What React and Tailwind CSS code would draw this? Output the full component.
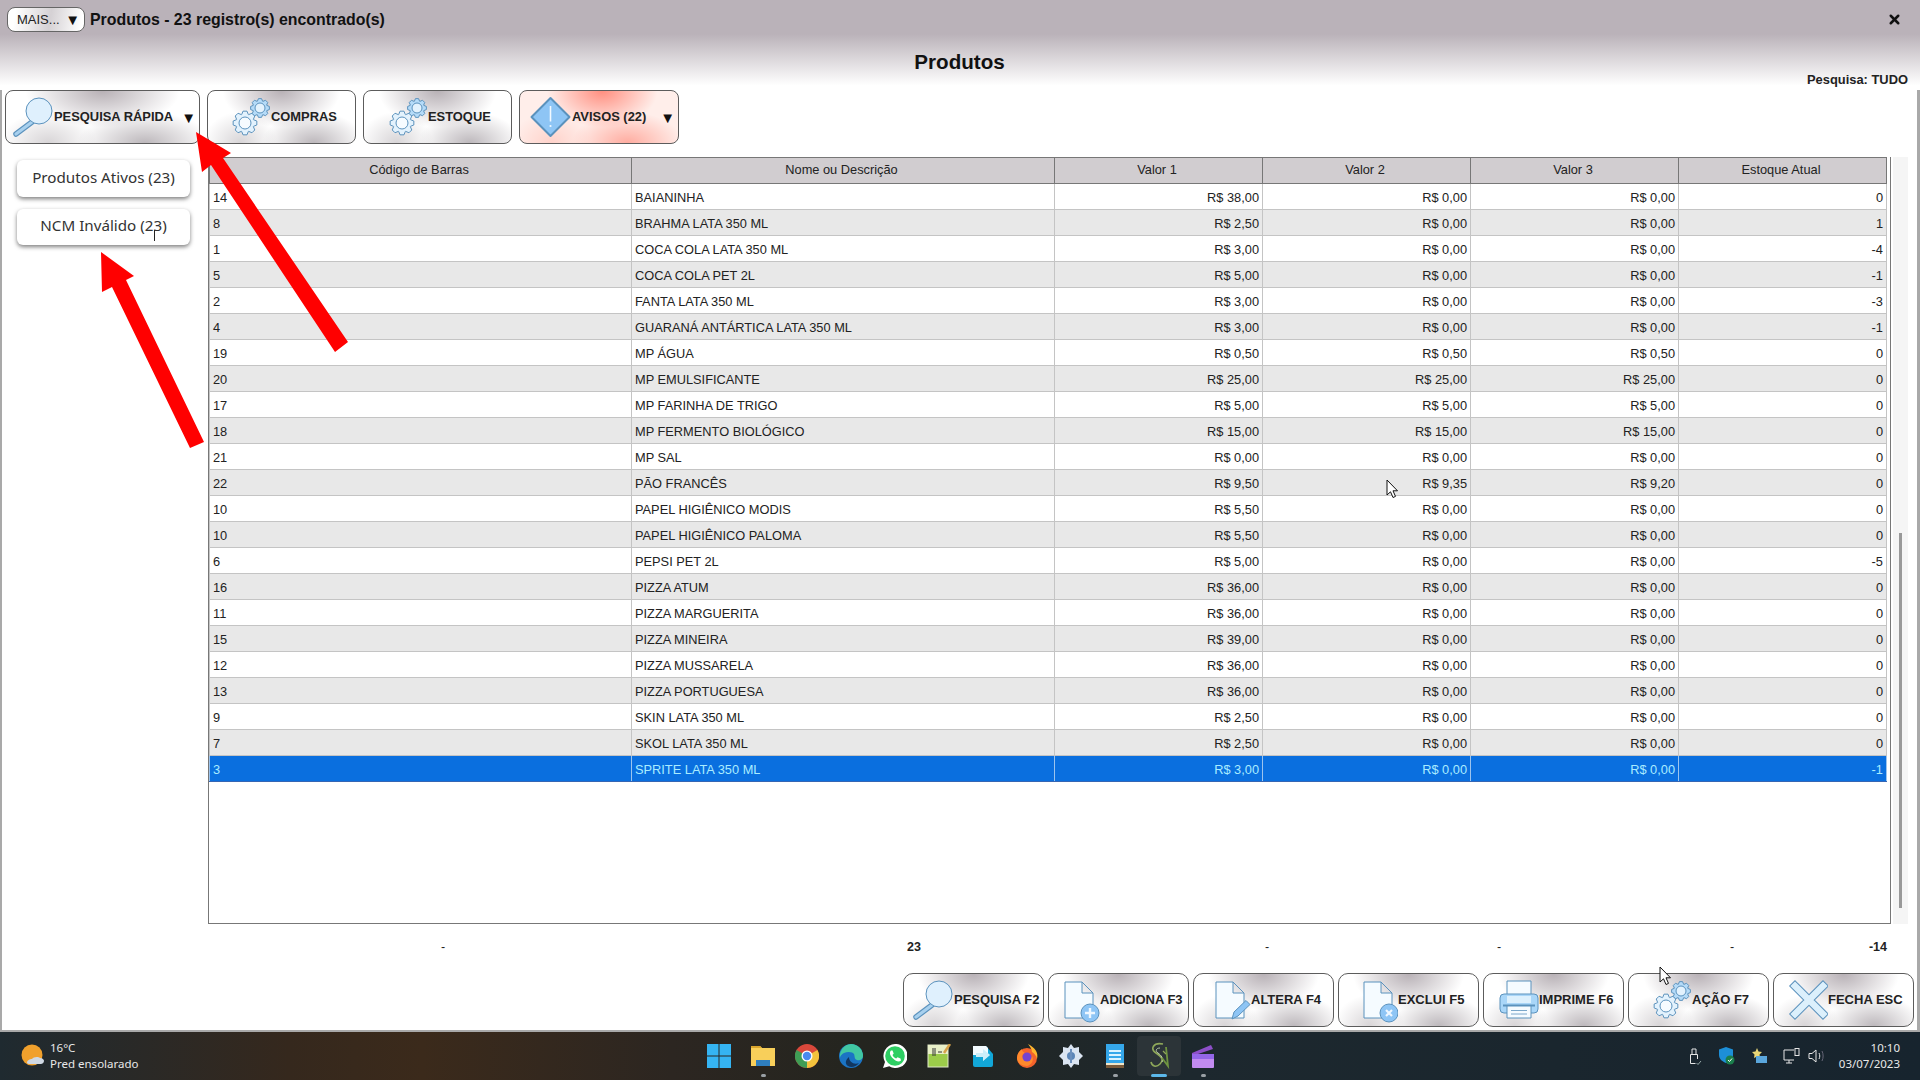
import React from 'react';
import { X } from 'lucide-react';

const line = '#5b92bd';
const pale = '#e3f2fd';
const mid = '#8ec5f5';

const rows = [
  ['14', 'BAIANINHA', 'R$ 38,00', 'R$ 0,00', 'R$ 0,00', '0'],
  ['8', 'BRAHMA LATA 350 ML', 'R$ 2,50', 'R$ 0,00', 'R$ 0,00', '1'],
  ['1', 'COCA COLA LATA 350 ML', 'R$ 3,00', 'R$ 0,00', 'R$ 0,00', '-4'],
  ['5', 'COCA COLA PET 2L', 'R$ 5,00', 'R$ 0,00', 'R$ 0,00', '-1'],
  ['2', 'FANTA LATA 350 ML', 'R$ 3,00', 'R$ 0,00', 'R$ 0,00', '-3'],
  ['4', 'GUARANÁ ANTÁRTICA LATA 350 ML', 'R$ 3,00', 'R$ 0,00', 'R$ 0,00', '-1'],
  ['19', 'MP ÁGUA', 'R$ 0,50', 'R$ 0,50', 'R$ 0,50', '0'],
  ['20', 'MP EMULSIFICANTE', 'R$ 25,00', 'R$ 25,00', 'R$ 25,00', '0'],
  ['17', 'MP FARINHA DE TRIGO', 'R$ 5,00', 'R$ 5,00', 'R$ 5,00', '0'],
  ['18', 'MP FERMENTO BIOLÓGICO', 'R$ 15,00', 'R$ 15,00', 'R$ 15,00', '0'],
  ['21', 'MP SAL', 'R$ 0,00', 'R$ 0,00', 'R$ 0,00', '0'],
  ['22', 'PÃO FRANCÊS', 'R$ 9,50', 'R$ 9,35', 'R$ 9,20', '0'],
  ['10', 'PAPEL HIGIÊNICO MODIS', 'R$ 5,50', 'R$ 0,00', 'R$ 0,00', '0'],
  ['10', 'PAPEL HIGIÊNICO PALOMA', 'R$ 5,50', 'R$ 0,00', 'R$ 0,00', '0'],
  ['6', 'PEPSI PET 2L', 'R$ 5,00', 'R$ 0,00', 'R$ 0,00', '-5'],
  ['16', 'PIZZA ATUM', 'R$ 36,00', 'R$ 0,00', 'R$ 0,00', '0'],
  ['11', 'PIZZA MARGUERITA', 'R$ 36,00', 'R$ 0,00', 'R$ 0,00', '0'],
  ['15', 'PIZZA MINEIRA', 'R$ 39,00', 'R$ 0,00', 'R$ 0,00', '0'],
  ['12', 'PIZZA MUSSARELA', 'R$ 36,00', 'R$ 0,00', 'R$ 0,00', '0'],
  ['13', 'PIZZA PORTUGUESA', 'R$ 36,00', 'R$ 0,00', 'R$ 0,00', '0'],
  ['9', 'SKIN LATA 350 ML', 'R$ 2,50', 'R$ 0,00', 'R$ 0,00', '0'],
  ['7', 'SKOL LATA 350 ML', 'R$ 2,50', 'R$ 0,00', 'R$ 0,00', '0'],
  ['3', 'SPRITE LATA 350 ML', 'R$ 3,00', 'R$ 0,00', 'R$ 0,00', '-1'],
];

// gear outline with n teeth
function gearPath(cx, cy, r, n = 8) {
  const pts = [];
  for (let i = 0; i < n; i++) {
    const a = (i / n) * Math.PI * 2;
    const s = Math.PI / n;
    [[r * 0.76, -s * 0.95], [r, -s * 0.42], [r, s * 0.42], [r * 0.76, s * 0.95]].forEach(([d, o]) => {
      pts.push(`${(cx + d * Math.cos(a + o)).toFixed(2)} ${(cy + d * Math.sin(a + o)).toFixed(2)}`);
    });
  }
  return `M${pts.join('L')}Z`;
}

const Svg = ({ children }) => (
  <svg width="48" height="48" viewBox="0 0 48 48" className="shrink-0" strokeLinejoin="round">
    {children}
  </svg>
);

const SearchIcon = () => (
  <Svg>
    <line x1="26" y1="29" x2="10" y2="41" stroke={line} strokeWidth="5.5" strokeLinecap="round" />
    <line x1="26" y1="29" x2="10" y2="41" stroke="#a8d0ee" strokeWidth="3.2" strokeLinecap="round" />
    <circle cx="33" cy="18" r="13" fill="#dff0fd" stroke={line} strokeWidth="1" />
  </Svg>
);

const GearsIcon = () => (
  <Svg>
    <path d={gearPath(22, 30, 12)} fill={pale} stroke={line} strokeWidth="1" />
    <circle cx="22" cy="30" r="6" fill="#f6fbff" stroke={line} strokeWidth="1" />
    <path d={gearPath(37, 15, 9.5)} fill="#b5dbf8" stroke={line} strokeWidth="1" />
    <circle cx="37" cy="15" r="5" fill={pale} stroke={line} strokeWidth="1" />
  </Svg>
);

const Doc = ({ x }) => (
  <path
    d={`M${x} 6H${x + 17}L${x + 28} 17V42H${x}Z M${x + 17} 6V17H${x + 28}`}
    fill="#f5fbff"
    stroke={line}
    strokeWidth="1"
  />
);

const AddIcon = () => (
  <Svg>
    <Doc x={13} />
    <circle cx="38" cy="37" r="9" fill={mid} stroke={line} strokeWidth="1" />
    <path d="M38 32V42M33 37H43" stroke="#eef7ff" strokeWidth="2.4" />
  </Svg>
);

const EditIcon = () => (
  <Svg>
    <Doc x={13} />
    <path d="M29 43L31 36L43 24.5L47 28.5L35 40Z" fill={mid} stroke={line} strokeWidth="1" />
  </Svg>
);

const DeleteIcon = () => (
  <Svg>
    <Doc x={14} />
    <circle cx="39" cy="37" r="9" fill={mid} stroke={line} strokeWidth="1" />
    <path d="M36 34L42 40M42 34L36 40" stroke="#eef7ff" strokeWidth="2.2" />
  </Svg>
);

const PrintIcon = () => (
  <Svg>
    <rect x="16" y="5" width="24" height="15" fill="#f5fbff" stroke={line} />
    <rect x="9" y="18" width="38" height="19" rx="4" fill="#a9d6f8" stroke={line} />
    <rect x="16" y="20" width="24" height="7" fill="#dcf0fd" stroke="none" />
    <line x1="12" y1="29.5" x2="44" y2="29.5" stroke={line} strokeWidth="2" />
    <rect x="16" y="30" width="24" height="12" fill="#f5fbff" stroke={line} />
    <path d="M20 34.5H36M20 38H36" stroke={line} strokeWidth="0.8" />
  </Svg>
);

const CloseIcon = () => (
  <Svg>
    <path d="M15 10L43 38M43 10L15 38" stroke={line} strokeWidth="8.5" strokeLinecap="square" />
    <path d="M15 10L43 38M43 10L15 38" stroke="#dcf0fc" strokeWidth="6.5" strokeLinecap="square" />
  </Svg>
);

const WarnIcon = () => (
  <Svg>
    <path d="M26.5 5L45.5 24L26.5 43L7.5 24Z" fill={mid} stroke={line} strokeWidth="2" />
    <path d="M26.5 13V28.5" stroke="#f2f9ff" strokeWidth="1.6" />
    <circle cx="26.5" cy="33" r="1.1" fill="#f2f9ff" />
  </Svg>
);

const silver =
  'bg-white bg-[radial-gradient(ellipse_40%_70%_at_50%_0%,#b8b1b6,transparent),radial-gradient(ellipse_35%_60%_at_72%_100%,#bdb8bc,transparent),radial-gradient(ellipse_25%_60%_at_22%_100%,#d8d5d7,transparent)]';
const reddish =
  'bg-[#ffeeea] bg-[radial-gradient(ellipse_35%_70%_at_52%_0%,#ff8f80,transparent),radial-gradient(ellipse_35%_60%_at_68%_100%,#ffaca0,transparent),radial-gradient(ellipse_25%_60%_at_20%_100%,#ffd2ca,transparent)]';

const bottomButtons = [
  { label: 'PESQUISA F2', icon: <SearchIcon />, pad: 'pl-[2px]' },
  { label: 'ADICIONA F3', icon: <AddIcon />, pad: 'pl-[3px]' },
  { label: 'ALTERA F4', icon: <EditIcon />, pad: 'pl-[9px]' },
  { label: 'EXCLUI F5', icon: <DeleteIcon />, pad: 'pl-[11px]' },
  { label: 'IMPRIME F6', icon: <PrintIcon />, pad: 'pl-[7px]' },
  { label: 'AÇÃO F7', icon: <GearsIcon />, pad: 'pl-[15px]' },
  { label: 'FECHA ESC', icon: <CloseIcon />, pad: 'pl-[6px]' },
];

const ToolButton = ({ children, className }) => (
  <button className={`h-[54px] flex items-center rounded-lg border border-[#5c5c5c] text-[12.9px] font-bold text-[#222] ${className}`}>
    {children}
  </button>
);

/* taskbar icons */
const Win = () => (
  <svg width="24" height="24" viewBox="0 0 24 24">
    <path d="M0 0h11.5v11.5H0zM12.5 0H24v11.5H12.5zM0 12.5h11.5V24H0zM12.5 12.5H24V24H12.5z" fill="#35b4f2" />
  </svg>
);
const Folder = () => (
  <svg width="24" height="24" viewBox="0 0 24 24">
    <path d="M0 2h9l2 2h13v18H0z" fill="#f8cf5a" />
    <path d="M0 2h9l2 2H0z" fill="#d9a52d" />
    <path d="M5 16h14v6H5z" fill="#2f7fbf" />
  </svg>
);
const Chrome = () => (
  <svg width="24" height="24" viewBox="0 0 24 24">
    <circle cx="12" cy="12" r="12" fill="#d9483b" />
    <path d="M12 12L22.4 6A12 12 0 0 1 12 24z" fill="#f3c23c" />
    <path d="M12 12L12 24A12 12 0 0 1 1.6 6z" fill="#3f9d55" />
    <circle cx="12" cy="12" r="5.5" fill="#fff" />
    <circle cx="12" cy="12" r="4.2" fill="#4a8af0" />
  </svg>
);
const Edge = () => (
  <svg width="24" height="24" viewBox="0 0 24 24">
    <circle cx="12" cy="12" r="12" fill="#1b74c4" />
    <path d="M12 0a12 12 0 0 1 12 12c0 3-3 5-6 4-3-1-2-4-3-6S9 7 5 9 1 14 1 14A12 12 0 0 1 12 0z" fill="#41c7a2" />
    <path d="M10 13c0 5 5 8 10 6-3 4-8 5-11 3s-3-6 1-9z" fill="#12365f" />
  </svg>
);
const Whats = () => (
  <svg width="24" height="24" viewBox="0 0 24 24">
    <path d="M12 0a12 12 0 0 0-10 18L0 24l6.3-1.8A12 12 0 1 0 12 0z" fill="#fff" />
    <circle cx="12" cy="12" r="9.8" fill="#2ecf63" />
    <path d="M8 6.5c-2 2-1 5 2 8s6 4 8 2l-.5-2-3-1.2-1.3 1.3c-1.5-.6-3-2.2-3.7-3.7L10.7 9.5 9.5 6.5z" fill="#fff" />
  </svg>
);
const NotepadPP = () => (
  <svg width="24" height="24" viewBox="0 0 24 24">
    <rect x="1" y="1" width="20" height="22" fill="#9ccc4a" stroke="#dfe8c8" />
    <rect x="1" y="1" width="20" height="9" fill="#e9f0c8" />
    <path d="M6 4V12M8 4V12M11 8H15" stroke="#333" strokeWidth="1" />
    <path d="M17 9L23 0" stroke="#d6a24a" strokeWidth="2.5" />
  </svg>
);
const Share = () => (
  <svg width="24" height="24" viewBox="0 0 24 24">
    <path d="M2 2h13l7 8v11a2 2 0 0 1-2 2H4a2 2 0 0 1-2-2z" fill="#12a7d8" />
    <path d="M2 2h13l2 2v7H2z" fill="#f3fbff" />
    <path d="M5 9h7V5l7 6-7 6v-4H5z" fill="#fff" />
    <path d="M5 9h7V5l7 6-7 6v-4H5z" fill="#7fd4ef" opacity=".4" />
  </svg>
);
const Firefox = () => (
  <svg width="24" height="24" viewBox="0 0 24 24">
    <circle cx="12" cy="14" r="10" fill="#f4632c" />
    <path d="M13 0c6 3 11 8 9 15-1-4-3-6-5-7 0-3-2-5-4-8z" fill="#ffb52e" />
    <path d="M2 14c0-4 2-7 5-9 0 3 2 3 3 4-3 1-3 3-2 5 3 3 8 2 9-2 2 4 0 9-5 10-5 0-10-3-10-8z" fill="#ff8a2c" />
    <circle cx="12" cy="13" r="4.5" fill="#7543d0" />
  </svg>
);
const Snow = () => (
  <svg width="24" height="24" viewBox="0 0 24 24">
    <path d="M12 0l3 4 5-1 0 5 4 4-4 4 0 5-5-1-3 4-3-4-5 1 0-5-4-4 4-4 0-5 5 1z" fill="#dbe5f2" />
    <circle cx="12" cy="12" r="4" fill="#5d86b8" />
    <path d="M12 5v14" stroke="#6b8fbd" strokeWidth="2" />
  </svg>
);
const NotesIcon = () => (
  <svg width="24" height="24" viewBox="0 0 24 24">
    <rect x="3" y="0" width="18" height="20" fill="#35a7ea" />
    <rect x="3" y="20" width="18" height="4" fill="#7a5a3a" />
    <rect x="3" y="19" width="18" height="2" fill="#f0e5c8" />
    <path d="M6 7h12M6 11h12M6 15h12" stroke="#d9f2ff" strokeWidth="2" />
  </svg>
);
const SApp = () => (
  <svg width="24" height="28" viewBox="0 0 24 28" fill="none">
    <path d="M16 2C6 0 3 7 9 11s8 7 4 11-8 2-9-2" stroke="#8fa85a" strokeWidth="1.6" />
    <path d="M13 6c-4 0-5 3-2 5s6 6 4 9" stroke="#b9c9a8" strokeWidth="1" />
    <path d="M19 5l2 19-6-8" stroke="#6f9440" strokeWidth="1.8" />
    <path d="M16 9l3 3" stroke="#8fa85a" strokeWidth="1.2" />
  </svg>
);
const Clapper = () => (
  <svg width="24" height="24" viewBox="0 0 24 24">
    <path d="M1 9L20 1l2 4L1 12z" fill="#8d4fc9" />
    <rect x="1" y="10" width="22" height="14" rx="1" fill="#c28bf0" />
    <rect x="1" y="10" width="22" height="5" fill="#9466e8" />
  </svg>
);

const taskbarIcons = [
  { el: <Win /> },
  { el: <Folder />, dot: true },
  { el: <Chrome /> },
  { el: <Edge /> },
  { el: <Whats /> },
  { el: <NotepadPP /> },
  { el: <Share /> },
  { el: <Firefox /> },
  { el: <Snow /> },
  { el: <NotesIcon />, dot: true },
  { el: <SApp />, active: true },
  { el: <Clapper />, dot: true },
];

const Cursor = ({ className }) => (
  <svg width="13" height="20" viewBox="0 0 13 20" className={`absolute ${className}`}>
    <path d="M1 1V16L4.5 12.8L7 18.5L9.5 17.4L7 11.8H11.5Z" fill="#fff" stroke="#111" strokeWidth="1" strokeLinejoin="round" />
  </svg>
);

export default function App() {
  return (
    <div className="relative w-[1920px] h-[1080px] overflow-hidden bg-white font-['Liberation_Sans',Arial,sans-serif] text-[#222]">
      <div className="h-[1032px] border-l-2 border-r-[3px] border-b-2 border-[#a9a9a9] flex flex-col">
        {/* header */}
        <div className="h-[90px] shrink-0 bg-[linear-gradient(180deg,#bab2b9_0%,#bab2b9_38%,#ffffff_95%)] -ml-[2px] -mr-[3px] pl-[2px] pr-[3px]">
          <div className="flex items-center pt-[7px] pl-[5px]">
            <button className="w-[78px] h-[25px] pl-[9px] pr-[4px] flex items-center justify-between rounded-lg border border-[#666] bg-[linear-gradient(100deg,#ffffff_10%,#d5d1d4_55%,#ffffff_95%)] text-[13px]">
              <span>MAIS...</span>
              <span className="text-[15px] leading-none text-[#111]">▼</span>
            </button>
            <span className="ml-[5px] text-[15.9px] font-bold text-[#111]">Produtos - 23 registro(s) encontrado(s)</span>
            <X size={15} strokeWidth={4} className="ml-auto mr-[15px] text-[#111]" />
          </div>
          <div className="grid grid-cols-[1fr_auto_1fr] h-[58px]">
            <div />
            <h1 className="mt-[17px] leading-[26px] text-[20.6px] font-bold text-[#111]">Produtos</h1>
            <span className="self-end justify-self-end mb-[1px] mr-[9px] leading-[18px] text-[12.9px] font-bold text-[#222]">Pesquisa: TUDO</span>
          </div>
        </div>

        {/* toolbar */}
        <div className="flex gap-[7px] pl-[3px] shrink-0">
          <ToolButton className={`w-[195px] ${silver}`}>
            <SearchIcon />
            <span>PESQUISA RÁPIDA</span>
            <span className="ml-[8px] text-[15px] leading-none text-[#111]">▼</span>
          </ToolButton>
          <ToolButton className={`w-[149px] pl-[15px] ${silver}`}>
            <GearsIcon />
            <span>COMPRAS</span>
          </ToolButton>
          <ToolButton className={`w-[149px] pl-[16px] ${silver}`}>
            <GearsIcon />
            <span>ESTOQUE</span>
          </ToolButton>
          <ToolButton className={`w-[160px] pl-[4px] ${reddish}`}>
            <WarnIcon />
            <span>AVISOS (22)</span>
            <span className="ml-[14px] text-[15px] leading-none text-[#111]">▼</span>
          </ToolButton>
        </div>

        {/* content */}
        <div className="flex mt-[13px] h-[767px] shrink-0">
          <div className="w-[206px] shrink-0 pl-[15px] pt-[3px] flex flex-col gap-[12px] font-['Noto_Sans',sans-serif] text-[15.2px] text-[#333]">
            <button className="w-[173px] h-[37px] pb-[2px] rounded-md bg-white shadow-[0_2px_4px_rgba(0,0,0,0.5)]">Produtos Ativos (23)</button>
            <button className="w-[173px] h-[36px] pb-[3px] rounded-md bg-white shadow-[0_2px_4px_rgba(0,0,0,0.5)]">NCM Inválido (23)</button>
          </div>

          <div className="w-[1683px] h-full shrink-0 border-l border-r border-b border-[#777]">
            <table className="table-fixed w-[1677px] border-collapse text-[12.8px]">
              <colgroup>
                <col className="w-[422px]" />
                <col className="w-[423px]" />
                <col className="w-[208px]" />
                <col className="w-[208px]" />
                <col className="w-[208px]" />
                <col className="w-[208px]" />
              </colgroup>
              <thead>
                <tr className="h-[26px] bg-[#d1cdd0] text-[12.8px] font-normal">
                  {['Código de Barras', 'Nome ou Descrição', 'Valor 1', 'Valor 2', 'Valor 3', 'Estoque Atual'].map((h) => (
                    <th key={h} className="border border-[#777] font-normal text-center p-0 pb-[1px] pr-[3px]">{h}</th>
                  ))}
                </tr>
              </thead>
              <tbody>
                {rows.map((r, i) => {
                  const selected = i === rows.length - 1;
                  return (
                    <tr
                      key={i}
                      className={`h-[26px] ${selected ? 'bg-[#0a6fdf] text-[#a9ecff]' : i % 2 ? 'bg-[#e8e8e8]' : 'bg-white'}`}
                    >
                      {r.map((c, j) => (
                        <td
                          key={j}
                          className={`p-0 pt-[2px] border ${selected ? 'border-y-[#3566b4] border-x-[#9cc4ee]' : 'border-[#c4c4c4]'} ${j < 2 ? 'pl-[3px] text-left' : 'pr-[3px] text-right'}`}
                        >
                          {c}
                        </td>
                      ))}
                    </tr>
                  );
                })}
              </tbody>
            </table>
          </div>

          <div className="ml-[2px] w-[15px] h-full bg-[#f5f5f5] flex flex-col justify-end items-center pb-[16px]">
            <div className="w-[3px] h-[375px] bg-[#999]" />
          </div>
        </div>

        {/* totals */}
        <div className="flex pl-[206px] mt-[13px] h-[20px] items-center text-[12.5px] shrink-0">
          <span className="w-[470px] text-center">-</span>
          <span className="w-[472px] text-center font-bold">23</span>
          <span className="w-[234px] text-center">-</span>
          <span className="w-[230px] text-center">-</span>
          <span className="w-[236px] text-center">-</span>
          <span className="w-[37px] text-right font-bold">-14</span>
        </div>

        {/* action buttons */}
        <div className="flex justify-end gap-[4px] pr-[3px] mt-[16px] shrink-0">
          {bottomButtons.map((b) => (
            <button
              key={b.label}
              className={`w-[141px] h-[54px] flex items-center rounded-[10px] border border-[#5c5c5c] text-[13px] font-bold text-[#222] ${silver} ${b.pad}`}
            >
              {b.icon}
              <span className="whitespace-nowrap">{b.label}</span>
            </button>
          ))}
        </div>
      </div>

      {/* taskbar */}
      <div className="h-[48px] flex items-center bg-[linear-gradient(90deg,#1f2a30_0%,#35281d_15%,#3b2a1b_22%,#2c2621_35%,#24251f_45%,#1d282e_62%,#17242e_100%)] text-white font-['Noto_Sans',sans-serif]">
        <div className="w-[50px] pl-[21px] shrink-0">
          <svg width="24" height="26" viewBox="0 0 24 26">
            <circle cx="11" cy="12" r="10.5" fill="#f0a02c" />
            <path d="M6 20c0-3 3-4 5-4 1-2 6-3 8-1 3 0 4 2 4 3 0 2-2 3-3 3H8c-1 0-2-1-2-1z" fill="#cfd8e3" />
          </svg>
        </div>
        <div className="w-[647px] shrink-0 flex flex-col text-[11.5px] leading-[16px] text-[#e8e8e8]">
          <span>16°C</span>
          <span>Pred ensolarado</span>
        </div>
        <div className="flex shrink-0">
          {taskbarIcons.map((t, i) => (
            <div key={i} className={`relative w-[44px] h-[40px] flex items-center justify-center rounded ${t.active ? 'bg-[#2c3438]' : ''}`}>
              {t.el}
              {t.dot && <span className="absolute bottom-[-1px] w-[5px] h-[3px] rounded-full bg-[#9aa0a5]" />}
              {t.active && <span className="absolute bottom-[-1px] w-[16px] h-[3px] rounded-full bg-[#5cb8ea]" />}
            </div>
          ))}
        </div>
        <div className="flex items-center ml-[463px] gap-[17px] shrink-0">
          <svg width="14" height="17" viewBox="0 0 14 17" fill="none" stroke="#e6e6e6" strokeWidth="1">
            <path d="M2.5 6.5V15.5H7.5M2.5 6.5H9.5V11M4 6.5V1H8V6.5" />
            <path d="M8.5 15l1.5 1.5 3-3.5" stroke="#9aa" />
          </svg>
          <svg width="16" height="18" viewBox="0 0 16 18">
            <path d="M7 0l7 2.5V8c0 3-2 6-7 8-5-2-7-5-7-8V2.5z" fill="#1d8fd8" />
            <circle cx="11" cy="13" r="4.5" fill="#1b7f4c" />
            <path d="M9 13l1.5 1.5 2.5-3" stroke="#fff" fill="none" />
          </svg>
          <svg width="15" height="16" viewBox="0 0 15 16">
            <path d="M5 0l1.5 3.5 3.5.5-2.5 2.500.5 3.500L5 8.500 2 10l.5-3.500L0 4l3.500-.5z" fill="#e8d676" />
            <rect x="4" y="8" width="11" height="7" fill="#5aa6dc" />
          </svg>
          <div className="flex items-center gap-[8px] -ml-[1px]">
            <svg width="17" height="16" viewBox="0 0 17 16" fill="none" stroke="#e6e6e6" strokeWidth="1">
              <path d="M11 2H1V12H11M6 12V15M3 15H9" />
              <rect x="12" y="0.5" width="4" height="7" />
            </svg>
            <svg width="17" height="14" viewBox="0 0 17 14" fill="none" stroke="#e6e6e6" strokeWidth="1">
              <path d="M1 4.5V9.5H4L8 13V1L4 4.5Z" />
              <path d="M11 4c1 2 1 4 0 6" />
              <path d="M14 2c1.5 3 1.5 7 0 10" stroke="#667" />
            </svg>
          </div>
        </div>
        <div className="ml-auto pr-[20px] flex flex-col items-end text-[11.5px] leading-[16px] text-[#e8e8e8]">
          <span>10:10</span>
          <span>03/07/2023</span>
        </div>
      </div>

      {/* red arrows drawn on top of the screenshot */}
      <svg width="1920" height="1080" viewBox="0 0 1920 1080" className="absolute inset-0 pointer-events-none">
        <polygon points="196,132 231,153 223,158 348,342 335,352 211,165 202,172" fill="#ff0000" />
        <polygon points="101,252 134,276 126,280 204,442 190,448 112,287 102,292" fill="#ff0000" />
      </svg>

      <Cursor className="left-[1386px] top-[479px]" />
      <Cursor className="left-[1659px] top-[966px]" />
      <div className="absolute left-[154px] top-[230px] w-px h-[11px] bg-[#222]" />
    </div>
  );
}
